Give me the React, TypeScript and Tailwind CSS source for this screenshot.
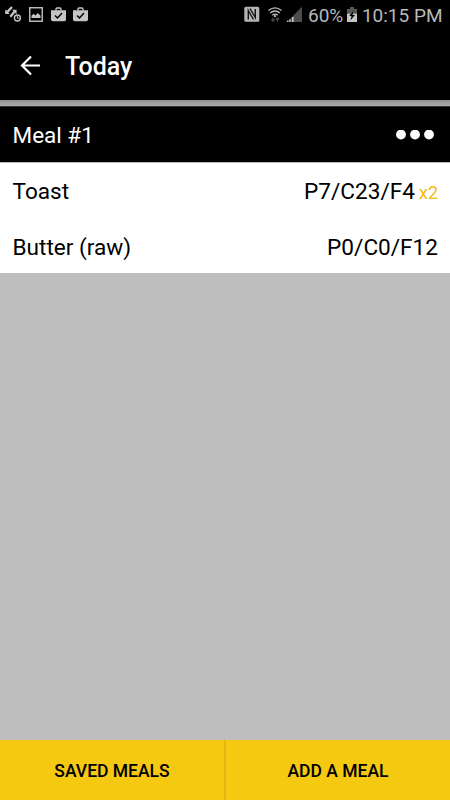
import React from "react";

function SyncIcon() {
  return (
    <svg className="block" width="18" height="18" viewBox="0 0 18 18">
      <path d="M7 2 2 7.300M10.300 5.800 5.300 11.800" fill="none" stroke="#c4c4c4" strokeWidth="2.400" />
      <path d="M.2 4.300 4.800 8.900H.2zM7 4.700h4.600v4.600z" fill="#c4c4c4" />
      <circle cx="12.400" cy="13" r="3.900" fill="#000" />
      <circle cx="12.400" cy="13" r="3" fill="none" stroke="#c4c4c4" strokeWidth="1.400" />
      <path d="M12.300 11v2.200h1.900" fill="none" stroke="#c4c4c4" strokeWidth="1" />
    </svg>
  );
}

function ImageIcon() {
  return (
    <svg className="block" width="14" height="15" viewBox="0 0 14 15">
      <rect x="0.75" y="0.75" width="12.5" height="13.5" fill="none" stroke="#c4c4c4" strokeWidth="1.4" />
      <path d="M2.5 11V8.7L4.7 6.8 6.5 8.4 8.8 6l2.7 2.8V11z" fill="#c4c4c4" />
    </svg>
  );
}

function BagIcon() {
  return (
    <svg className="block" width="15" height="15" viewBox="0 0 15 15">
      <path d="M5 3.5V2q0-1 1-1h3q1 0 1 1v1.5" fill="none" stroke="#c4c4c4" strokeWidth="1.4" />
      <path d="M0 3.2h15v9.3q0 1.7-1.7 1.7H1.7Q0 14.200 0 12.500z" fill="#c4c4c4" />
      <path d="m4 8.500 2.500 2.500 4.500-5" fill="none" stroke="#000" strokeWidth="1.500" />
    </svg>
  );
}

function StatusBar() {
  return (
    <div className="relative h-[31px] text-[#b9b9b9]">
      <div className="flex h-[31px] items-start pl-[5px]">
        <div className="mt-[5px] w-6"><SyncIcon /></div>
        <div className="mt-[7px] w-[22px]"><ImageIcon /></div>
        <div className="mt-[7px] w-[22px]"><BagIcon /></div>
        <div className="mt-[7px]"><BagIcon /></div>
        <svg className="mt-[5px] ml-[156px] block shrink-0" width="60" height="20" viewBox="0 0 60 20">
          <rect x="0.300" y="1.700" width="15" height="15" rx="1.500" fill="#b4b4b4" />
          <path d="M4.300 14.500V5.500L9.500 14.500M6 3.500 11.300 12.500V4" fill="none" stroke="#111" strokeWidth="1.400" />
          <path d="M24.500 5.500Q31 .3 37.500 5.500M26.300 7.900Q31 4 35.700 7.900M28.300 10.200Q31 8 33.700 10.200" fill="none" stroke="#bdbdbd" strokeWidth="1.400" />
          <circle cx="31" cy="11.200" r="1.100" fill="#bdbdbd" />
          <path d="M29 12.500V16M27.300 14.300l1.700 1.900 1.700-1.900M33.500 16.500V13M31.800 14.700l1.700-1.900 1.700 1.900" fill="none" stroke="#4b4b4b" strokeWidth="1.200" />
          <path d="M43 17 58 1.700V17z" fill="#4c4c4c" />
          <path d="M43 17v-1.500h1.200V17zM45.300 17v-2.800h1.400V17zM48 17v-5h1.600v5z" fill="#c4c4c4" />
        </svg>
      </div>
      <span className="absolute left-[308px] top-[4px] text-[19px] leading-6">60%</span>
      <svg className="absolute left-[347px] top-[7px]" width="10" height="16" viewBox="0 0 10 16">
        <path d="M3 0h4v2h3v4.500H0V2h3z" fill="#565656" />
        <path d="M0 6.500h10V15H0z" fill="#c4c4c4" />
        <path d="M6.300 3.800 2.300 9h2.200l-1 4.300L8 8H5.500z" fill="#000" />
      </svg>
      <span className="absolute right-[7.500px] top-[4px] whitespace-nowrap text-[19px] leading-6">10:15 PM</span>
    </div>
  );
}

function FoodRow({ name, macros, count }: { name: string; macros: string; count?: string }) {
  return (
    <div className="flex items-baseline justify-between pr-[12px] pl-[12.500px] text-[22.600px] leading-[55px]">
      <span>{name}</span>
      <span>
        {macros}
        {count && <span className="ml-1 text-[18px] text-[#f5b914]">{count}</span>}
      </span>
    </div>
  );
}

export default function App() {
  return (
    <div className="flex h-[800px] w-[450px] flex-col overflow-hidden bg-[#bdbdbd] font-[Roboto,sans-serif] text-black">
      <header className="h-[100px] shrink-0 bg-black">
        <StatusBar />
        <div className="flex h-[69px] items-center pl-[20px] text-white">
          <svg className="block" width="21" height="22" viewBox="0 0 21 22">
            <path d="M20 10.500H2M11 1.500 2 10.500l9 9" fill="none" stroke="#fff" strokeWidth="2.200" />
          </svg>
          <h1 className="ml-6 mt-[2px] text-[25px] font-medium leading-[30px]">Today</h1>
        </div>
      </header>
      <div className="h-[6px] shrink-0 bg-linear-to-b from-[#929292] to-[#acacac]" />
      <section className="shrink-0">
        <div className="flex h-[56px] items-center justify-between border-t border-[#333] bg-black pr-[16px] pl-[12.500px] text-white">
          <h2 className="text-[22.500px] leading-[30px]">Meal #1</h2>
          <svg className="block" width="38" height="10" viewBox="0 0 38 10">
            <circle cx="5" cy="4.500" r="4.900" fill="#fff" />
            <circle cx="19" cy="4.500" r="4.900" fill="#fff" />
            <circle cx="33" cy="4.500" r="4.900" fill="#fff" />
          </svg>
        </div>
        <div className="h-[111px] border-t border-[#bbb] bg-white pt-[1px]">
          <FoodRow name="Toast" macros="P7/C23/F4" count="x2" />
          <FoodRow name="Butter (raw)" macros="P0/C0/F12" />
        </div>
      </section>
      <main className="flex-1" />
      <footer className="flex h-[60px] shrink-0 bg-[#f5c811] text-[17.500px] font-medium">
        <button className="w-[226px] border-r-2 border-[#e2b711] pt-[2px]">SAVED MEALS</button>
        <button className="flex-1 pt-[2px]">ADD A MEAL</button>
      </footer>
    </div>
  );
}
